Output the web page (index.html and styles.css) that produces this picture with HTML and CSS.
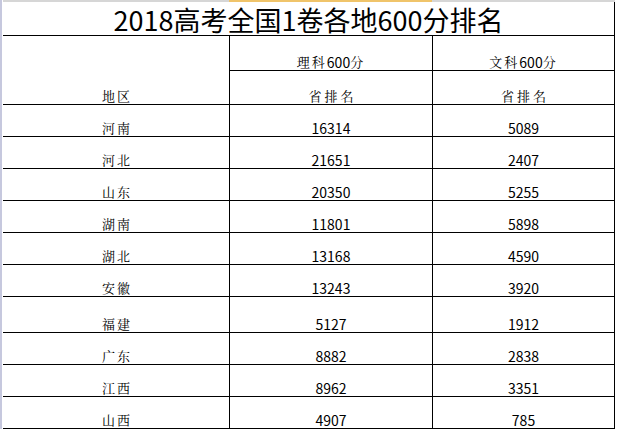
FILE: index.html
```html
<!DOCTYPE html>
<html lang="zh-CN">
<head>
<meta charset="utf-8">
<title>2018高考全国1卷各地600分排名</title>
<link rel="stylesheet" href="styles.css">
</head>
<body>
<div class="sheet">
  <div class="colheads"><span class="ch"></span><span class="ch sel"></span><span class="ch"></span></div>
  <div class="grid">
    <div class="cell title">2018高考全国1卷各地600分排名</div>
    <div class="cell region head-region"><span class="cn">地区</span></div>
    <div class="cell num"><span class="cn">理科</span>600<span class="cn">分</span></div>
    <div class="cell num"><span class="cn">文科</span>600<span class="cn">分</span></div>
    <div class="cell num"><span class="cn wide">省排名</span></div>
    <div class="cell num"><span class="cn wide">省排名</span></div>

    <div class="cell region"><span class="cn">河南</span></div><div class="cell num">16314</div><div class="cell num">5089</div>
    <div class="cell region"><span class="cn">河北</span></div><div class="cell num">21651</div><div class="cell num">2407</div>
    <div class="cell region"><span class="cn">山东</span></div><div class="cell num">20350</div><div class="cell num">5255</div>
    <div class="cell region"><span class="cn">湖南</span></div><div class="cell num">11801</div><div class="cell num">5898</div>
    <div class="cell region"><span class="cn">湖北</span></div><div class="cell num">13168</div><div class="cell num">4590</div>
    <div class="cell region"><span class="cn">安徽</span></div><div class="cell num">13243</div><div class="cell num">3920</div>
    <div class="cell region"><span class="cn">福建</span></div><div class="cell num">5127</div><div class="cell num">1912</div>
    <div class="cell region"><span class="cn">广东</span></div><div class="cell num">8882</div><div class="cell num">2838</div>
    <div class="cell region"><span class="cn">江西</span></div><div class="cell num">8962</div><div class="cell num">3351</div>
    <div class="cell region"><span class="cn">山西</span></div><div class="cell num">4907</div><div class="cell num">785</div>
  </div>
</div>
</body>
</html>
```
FILE: styles.css
```css
html, body {
  margin: 0;
  padding: 0;
  background: #fff;
}
body {
  width: 618px;
  height: 431px;
  overflow: hidden;
  font-family: "Noto Sans CJK SC", "Noto Sans", sans-serif;
  color: #000;
}
.sheet {
  border-left: 2px solid #c6c8de;
  padding-left: 1px;
}
.colheads {
  display: grid;
  grid-template-columns: 226px 203px 183px;
  height: 2px;
}
.ch {
  background: #d6d6d6;
}
.ch.sel {
  background: #f0c46a;
}
.grid {
  display: grid;
  grid-template-columns: 226px 202px 181px;
  grid-template-rows: 33px 34px 33px repeat(6, 31px) 35px repeat(3, 31px);
  gap: 1px;
  background: #000;
  width: 612px;
  border-right: 1px solid #000;
  border-bottom: 1px solid #000;
  box-sizing: border-box;
  padding-right: 0;
}
.cell {
  background: #fff;
  display: flex;
  align-items: flex-end;
  justify-content: center;
  font-size: 14px;
  line-height: 16px;
  padding-bottom: 0;
}
.title {
  grid-column: 1 / 4;
  align-items: center;
  font-size: 27px;
  line-height: 33px;
  padding-top: 1px;
}
.head-region {
  grid-row: 2 / 4;
}
.cn {
  font-family: "Noto Serif CJK SC", "Noto Sans CJK SC", serif;
  font-size: 13px;
  letter-spacing: 2px;
  margin-right: -2px;
}
.cn.wide {
  letter-spacing: 3px;
  margin-right: -3px;
}
.num .cn {
  margin-right: 0;
}
.num .cn.wide {
  margin-right: -3px;
}
```
